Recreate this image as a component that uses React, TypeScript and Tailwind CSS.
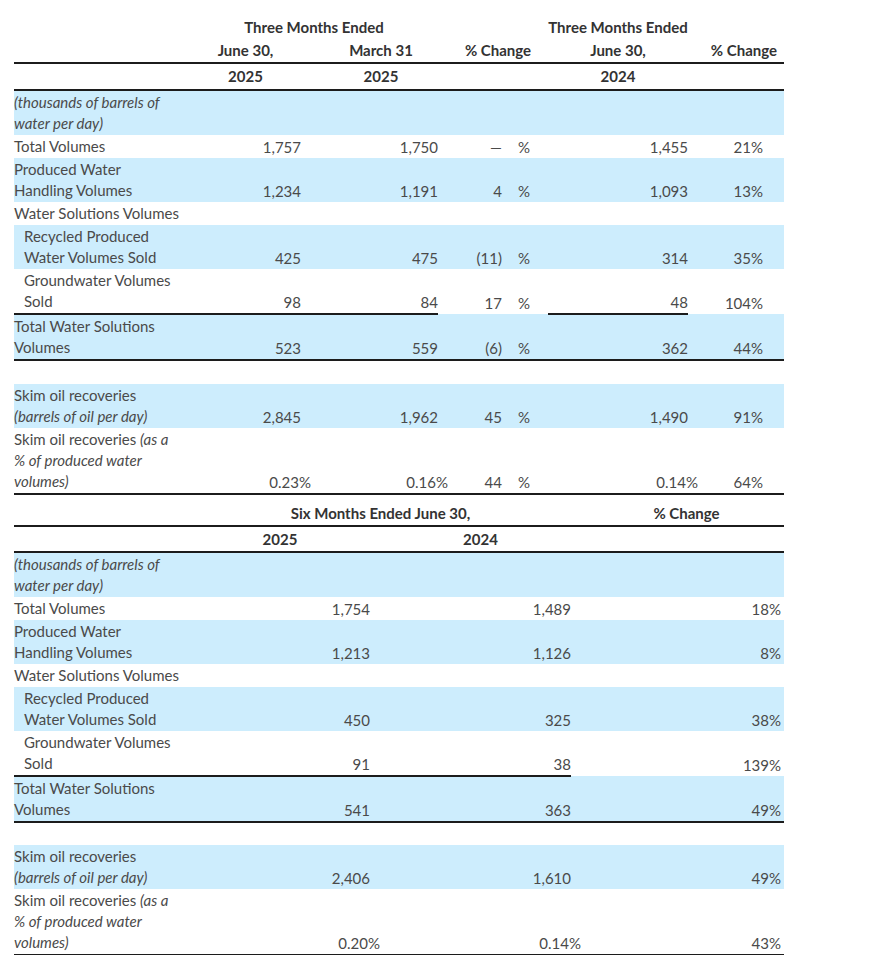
import React from "react";

type Cell = React.ReactNode;

const blue = "bg-[#cdedfd]";
const font = { fontFamily: "Lato, 'Open Sans', sans-serif" };

// hanging percent sign for ratio values
const Pct = ({ v }: { v: string }) => (
  <span className="inline-block -mr-[10px]">
    {v}
    <span>%</span>
  </span>
);

const Thousands = () => (
  <span className="italic">
    (thousands of barrels of
    <br />
    water per day)
  </span>
);
const SkimPct = () => (
  <>
    Skim oil recoveries <span className="italic">(as a</span>
    <br />
    <span className="italic">% of produced water</span>
    <br />
    <span className="italic">volumes)</span>
  </>
);
const SkimBbl = () => (
  <>
    Skim oil recoveries
    <br />
    <span className="italic">(barrels of oil per day)</span>
  </>
);
const TwoLine = ({ a, b }: { a: string; b: string }) => (
  <>
    {a}
    <br />
    {b}
  </>
);

type QRow = {
  label: React.ReactNode;
  indent?: boolean;
  blue?: boolean;
  vals?: Cell[];
  underline?: boolean;
  bottom?: boolean;
  empty?: boolean;
};

const quarterRows: QRow[] = [
  { label: <Thousands />, blue: true },
  { label: "Total Volumes", vals: ["1,757", "1,750", "—", "1,455", "21%"] },
  { label: <TwoLine a="Produced Water" b="Handling Volumes" />, blue: true, vals: ["1,234", "1,191", "4", "1,093", "13%"] },
  { label: "Water Solutions Volumes" },
  { label: <TwoLine a="Recycled Produced" b="Water Volumes Sold" />, indent: true, blue: true, vals: ["425", "475", "(11)", "314", "35%"] },
  { label: <TwoLine a="Groundwater Volumes" b="Sold" />, indent: true, vals: ["98", "84", "17", "48", "104%"], underline: true },
  { label: <TwoLine a="Total Water Solutions" b="Volumes" />, blue: true, vals: ["523", "559", "(6)", "362", "44%"], bottom: true },
  { label: "", empty: true },
  { label: <SkimBbl />, blue: true, vals: ["2,845", "1,962", "45", "1,490", "91%"] },
  { label: <SkimPct />, vals: [<Pct v="0.23" />, <Pct v="0.16" />, "44", <Pct v="0.14" />, "64%"], bottom: true },
];

const sixRows: QRow[] = [
  { label: <Thousands />, blue: true },
  { label: "Total Volumes", vals: ["1,754", "1,489", "18%"] },
  { label: <TwoLine a="Produced Water" b="Handling Volumes" />, blue: true, vals: ["1,213", "1,126", "8%"] },
  { label: "Water Solutions Volumes" },
  { label: <TwoLine a="Recycled Produced" b="Water Volumes Sold" />, indent: true, blue: true, vals: ["450", "325", "38%"] },
  { label: <TwoLine a="Groundwater Volumes" b="Sold" />, indent: true, vals: ["91", "38", "139%"], underline: true },
  { label: <TwoLine a="Total Water Solutions" b="Volumes" />, blue: true, vals: ["541", "363", "49%"], bottom: true },
  { label: "", empty: true },
  { label: <SkimBbl />, blue: true, vals: ["2,406", "1,610", "49%"] },
  { label: <SkimPct />, vals: [<Pct v="0.20" />, <Pct v="0.14" />, "43%"], bottom: true },
];

const line = "border-b-2 border-[#1c1c1c]";

export default function App() {
  return (
    <div className="min-h-screen bg-white pl-[14px] pt-[16px] text-[15px] text-[#4a4a4a]" style={font}>
      {/* three months table */}
      <table className="w-[770px] table-fixed border-collapse leading-[21px]">
        <colgroup>
          <col className="w-[176px]" />
          <col className="w-[111px]" />
          <col className="w-[23px]" />
          <col className="w-[114px]" />
          <col className="w-[68px]" />
          <col className="w-[42px]" />
          <col className="w-[140px]" />
          <col className="w-[96px]" />
        </colgroup>
        <thead className="font-bold text-[#333]">
          <tr className="h-[23px]">
            <th />
            <th colSpan={3} className="text-center font-bold">Three Months Ended</th>
            <th colSpan={2} />
            <th className="text-center font-bold whitespace-nowrap">Three Months Ended</th>
            <th />
          </tr>
          <tr className={`h-[24px] ${line}`}>
            <th />
            <th className="text-center font-bold">June 30,</th>
            <th />
            <th className="text-center font-bold">March 31</th>
            <th colSpan={2} className="text-center font-bold pl-[10px]">% Change</th>
            <th className="text-center font-bold">June 30,</th>
            <th className="text-right font-bold pr-[7px]">% Change</th>
          </tr>
          <tr className={`h-[27px] ${line}`}>
            <th />
            <th className="text-center font-bold">2025</th>
            <th />
            <th className="text-center font-bold">2025</th>
            <th colSpan={2} />
            <th className="text-center font-bold">2024</th>
            <th />
          </tr>
        </thead>
        <tbody>
          {quarterRows.map((r, i) => {
            const v = r.vals;
            const ul = r.underline ? line : "";
            return (
              <tr key={i} className={`${r.blue ? blue : ""} ${r.bottom ? line : ""} ${r.empty ? "h-[24px]" : ""}`}>
                {r.empty ? (
                  <td colSpan={8} />
                ) : (
                  <>
                    <td className={`align-bottom whitespace-nowrap py-[1px] ${r.indent ? "pl-[10px]" : "pl-0"} ${ul}`}>{r.label}</td>
                    <td className={`align-bottom text-right ${ul}`}>{v?.[0]}</td>
                    <td className={ul} />
                    <td className={`align-bottom text-right ${ul}`}>{v?.[1]}</td>
                    <td className="align-bottom text-right pr-[4px]">{v?.[2]}</td>
                    <td className="align-bottom pl-[12px]">{v ? "%" : ""}</td>
                    <td className={`align-bottom text-right ${ul}`}>{v?.[3]}</td>
                    <td className="align-bottom text-right pr-[21px]">{v?.[4]}</td>
                  </>
                )}
              </tr>
            );
          })}
        </tbody>
      </table>

      {/* six months table */}
      <table className="w-[770px] table-fixed border-collapse leading-[21px]">
        <colgroup>
          <col className="w-[176px]" />
          <col className="w-[180px]" />
          <col className="w-[201px]" />
          <col className="w-[213px]" />
        </colgroup>
        <thead className="text-[#333]">
          <tr className={`h-[31px] ${line}`}>
            <th />
            <th colSpan={2} className="text-center font-bold align-bottom pb-[1px]">Six Months Ended June 30,</th>
            <th className="text-center font-bold align-bottom pb-[1px] pl-[18px]">% Change</th>
          </tr>
          <tr className={`h-[26px] ${line}`}>
            <th />
            <th className="text-center font-bold">2025</th>
            <th className="text-center font-bold pl-[20px]">2024</th>
            <th />
          </tr>
        </thead>
        <tbody>
          {sixRows.map((r, i) => {
            const v = r.vals;
            const ul = r.underline ? line : "";
            return (
              <tr key={i} className={`${r.blue ? blue : ""} ${r.bottom ? line : ""} ${r.empty ? "h-[23px]" : ""}`}>
                {r.empty ? (
                  <td colSpan={4} />
                ) : (
                  <>
                    <td className={`align-bottom whitespace-nowrap py-[1px] ${r.indent ? "pl-[10px]" : "pl-0"} ${ul}`}>{r.label}</td>
                    <td className={`align-bottom text-right ${ul}`}>{v?.[0]}</td>
                    <td className={`align-bottom text-right ${ul}`}>{v?.[1]}</td>
                    <td className="align-bottom text-right pr-[3px]">{v?.[2]}</td>
                  </>
                )}
              </tr>
            );
          })}
        </tbody>
      </table>
    </div>
  );
}
